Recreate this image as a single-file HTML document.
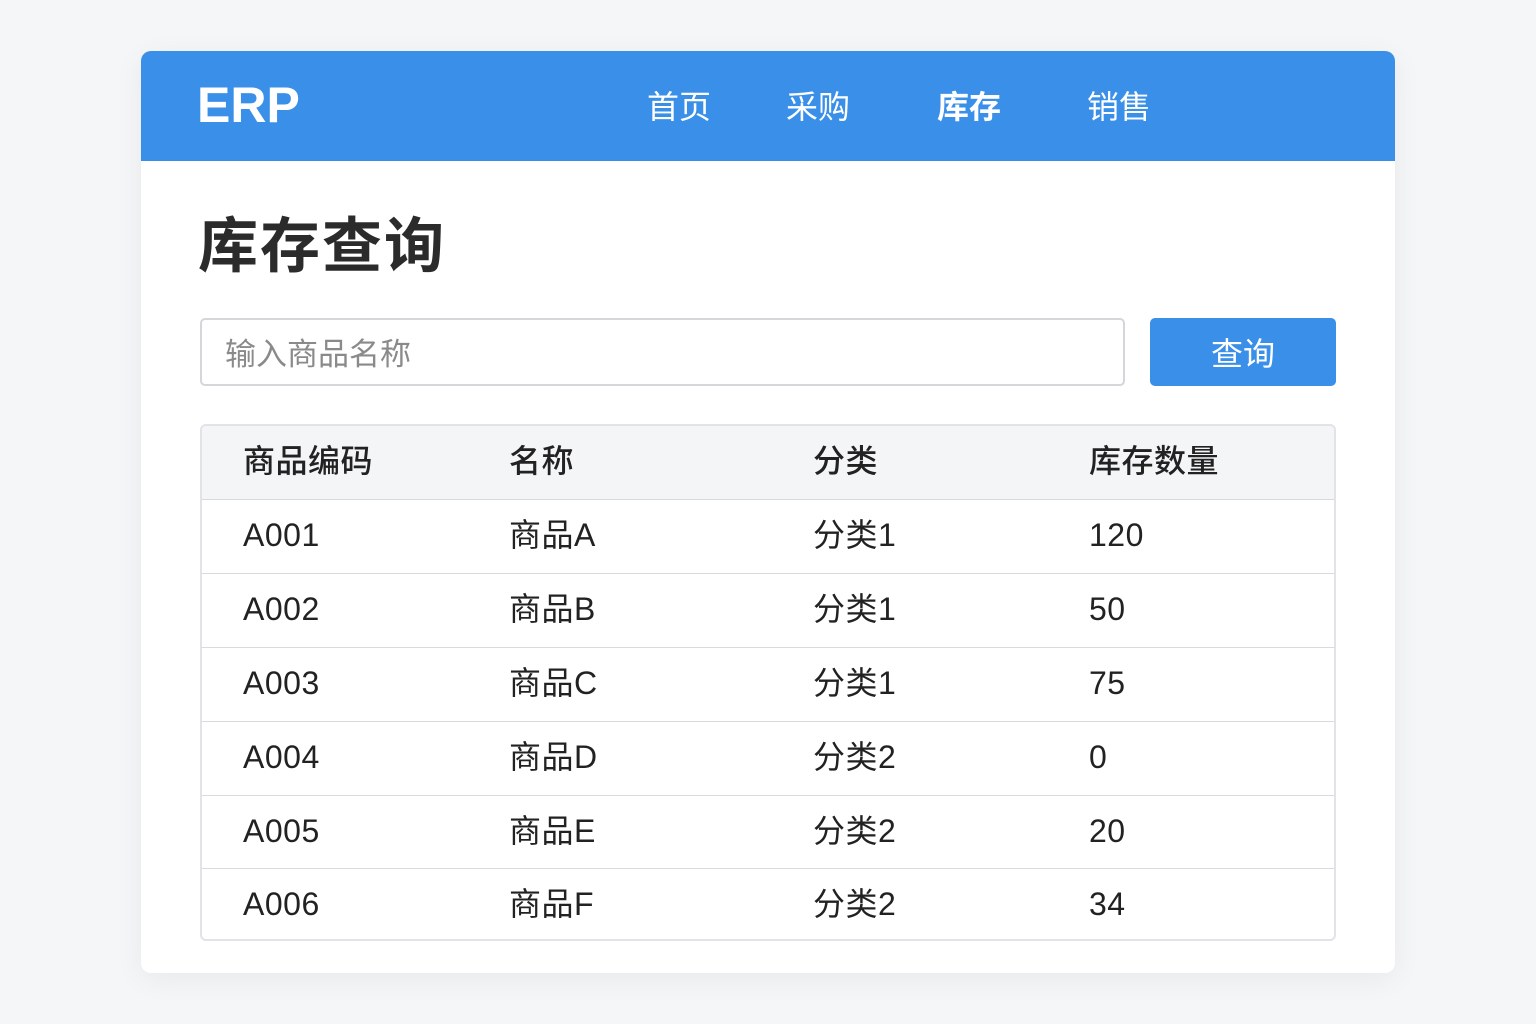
<!DOCTYPE html>
<html><head><meta charset="utf-8"><style>
*{margin:0;padding:0;box-sizing:border-box}
body{width:1536px;height:1024px;background:#f5f6f8;font-family:"Liberation Sans","Noto Sans CJK SC",sans-serif;position:relative;overflow:hidden}
.card{position:absolute;left:141px;top:51px;width:1254px;height:922px;background:#fff;border-radius:10px;box-shadow:0 6px 30px rgba(0,0,0,0.06);overflow:hidden}
.hdr{position:absolute;left:0;top:0;width:1254px;height:110px;background:#3a8fe8}
.logo{position:absolute;left:56px;top:25px;font-size:50px;font-weight:bold;color:#fff;letter-spacing:0px;font-family:"Liberation Sans",sans-serif}
.nav{position:absolute;top:34px;font-size:32px;color:#fff;line-height:40px;font-family:"Noto Sans CJK SC",sans-serif}
h1{position:absolute;left:57px;top:147px;font-size:60px;font-weight:bold;color:#2b2b2b;font-family:"Noto Sans CJK SC",sans-serif;letter-spacing:2px}
.inp{position:absolute;left:59px;top:267px;width:925px;height:68px;border:2px solid #d4d6d9;border-radius:5px;font-size:31px;color:#8a8a8a;padding-left:23px;line-height:64px;font-family:"Noto Sans CJK SC",sans-serif}
.btn{position:absolute;left:1009px;top:267px;width:186px;height:68px;background:#3a8fe8;border-radius:5px;color:#fff;font-size:32px;text-align:center;line-height:68px;font-family:"Noto Sans CJK SC",sans-serif}
.tbl{position:absolute;left:59px;top:373px;width:1136px;height:517px;border:2px solid #e1e3e6;border-radius:6px;overflow:hidden}
.row{position:absolute;left:0;width:1136px;height:74px;border-top:1px solid #d8dadd;font-size:32px;color:#222;font-family:"Liberation Sans","Noto Sans CJK SC",sans-serif}
.row span{position:absolute;top:16px;line-height:38px;letter-spacing:0.5px}
.th{background:#f3f5f7;border-top:none;font-weight:500}
</style></head><body>
<div class="card">
<div class="hdr">
<div class="logo">ERP</div>
<div class="nav" style="left:506px">首页</div>
<div class="nav" style="left:645px">采购</div>
<div class="nav" style="left:796px;font-weight:bold">库存</div>
<div class="nav" style="left:946px">销售</div>
</div>
<h1>库存查询</h1>
<div class="inp">输入商品名称</div>
<div class="btn">查询</div>
<div class="tbl">
<div class="row th" style="top:0"><span style="left:41px">商品编码</span><span style="left:307px">名称</span><span style="left:611px">分类</span><span style="left:887px">库存数量</span></div>
<div class="row" style="top:73px"><span style="left:41px">A001</span><span style="left:307px">商品A</span><span style="left:611px">分类1</span><span style="left:887px">120</span></div>
<div class="row" style="top:147px"><span style="left:41px">A002</span><span style="left:307px">商品B</span><span style="left:611px">分类1</span><span style="left:887px">50</span></div>
<div class="row" style="top:221px"><span style="left:41px">A003</span><span style="left:307px">商品C</span><span style="left:611px">分类1</span><span style="left:887px">75</span></div>
<div class="row" style="top:295px"><span style="left:41px">A004</span><span style="left:307px">商品D</span><span style="left:611px">分类2</span><span style="left:887px">0</span></div>
<div class="row" style="top:369px"><span style="left:41px">A005</span><span style="left:307px">商品E</span><span style="left:611px">分类2</span><span style="left:887px">20</span></div>
<div class="row" style="top:442px"><span style="left:41px">A006</span><span style="left:307px">商品F</span><span style="left:611px">分类2</span><span style="left:887px">34</span></div>
</div>
</div>
</body></html>
